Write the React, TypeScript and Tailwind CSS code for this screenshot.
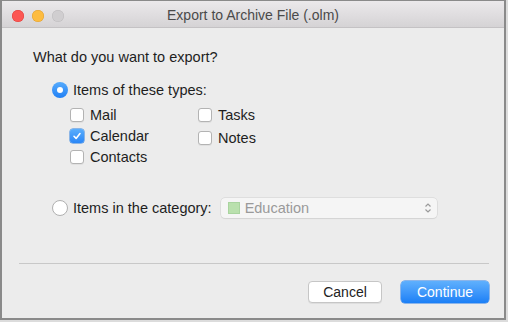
import React from 'react'

function Checkbox({ checked }: { checked?: boolean }) {
  if (checked) {
    return (
      <span className="flex h-[14px] w-[14px] items-center justify-center rounded-[3px] bg-gradient-to-b from-[#5aaefc] to-[#2a86f6] shadow-[0_0_0_0.5px_#2b7fe0]">
        <svg width="10" height="10" viewBox="0 0 10 10">
          <path d="M2 5.3 L4.1 7.4 L8 2.6" fill="none" stroke="white" strokeWidth="1.6" strokeLinecap="round" strokeLinejoin="round" />
        </svg>
      </span>
    )
  }
  return <span className="h-[14px] w-[14px] rounded-[3px] border border-[#b3b3b3] bg-white shadow-[0_1px_0_rgba(0,0,0,0.05)]" />
}

function Radio({ checked }: { checked?: boolean }) {
  if (checked) {
    return (
      <span className="flex h-[16px] w-[16px] items-center justify-center rounded-full bg-gradient-to-b from-[#56abfc] to-[#1f80f5]">
        <span className="h-[6px] w-[6px] rounded-full bg-white" />
      </span>
    )
  }
  return <span className="h-[16px] w-[16px] rounded-full border border-[#b0b0b0] bg-white" />
}

function CheckRow({ label, checked }: { label: string; checked?: boolean }) {
  return (
    <div className="flex h-[21px] items-center gap-[6px]">
      <Checkbox checked={checked} />
      <span>{label}</span>
    </div>
  )
}

export default function App() {
  return (
    <div
      className="h-[322px] w-[508px] bg-[#dcdcdc] text-[14.5px] leading-[18px] text-[#1e1e1e]"
      style={{ fontFamily: '"Liberation Sans", Arial, sans-serif' }}
    >
      <div className="flex h-[320px] w-[506px] flex-col border-[2px] border-[#8a8a8a] border-t-[1px] bg-[#ececec]">
        <div className="relative flex h-[27px] shrink-0 items-center justify-center border-b border-[#c4c2c4] bg-gradient-to-b from-[#ebe9eb] to-[#d5d3d5]">
          <div className="absolute left-[10px] top-[9px] flex gap-[8px]">
            <span className="h-[12px] w-[12px] rounded-full bg-[#fc5753] shadow-[inset_0_0_0_0.5px_#df3e3b]" />
            <span className="h-[12px] w-[12px] rounded-full bg-[#fdbc40] shadow-[inset_0_0_0_0.5px_#de9f34]" />
            <span className="h-[12px] w-[12px] rounded-full bg-[#d0ced0] shadow-[inset_0_0_0_0.5px_#bdbbbd]" />
          </div>
          <span className="pt-[2px] text-[14px] text-[#4a4a4a]">Export to Archive File (.olm)</span>
        </div>

        <div className="flex flex-1 flex-col px-[31px] pt-[20px]">
          <div>What do you want to export?</div>

          <div className="ml-[19px] mt-[15px] flex items-center gap-[5px]">
            <Radio checked />
            <span>Items of these types:</span>
          </div>

          <div className="ml-[37px] mt-[5px] flex">
            <div className="w-[128px]">
              <CheckRow label="Mail" />
              <CheckRow label="Calendar" checked />
              <CheckRow label="Contacts" />
            </div>
            <div>
              <CheckRow label="Tasks" />
              <div className="mt-[2px]">
                <CheckRow label="Notes" />
              </div>
            </div>
          </div>

          <div className="ml-[19px] mt-[31px] flex h-[20px] items-center gap-[5px]">
            <Radio />
            <span>Items in the category:</span>
            <div className="ml-[4px] flex h-[20px] w-[216px] items-center rounded-[4px] bg-[#f5f5f5] pl-[7px] pr-[5px] shadow-[0_0_0_0.5px_#cfcfcf,0_1px_1px_rgba(0,0,0,0.08)]">
              <span className="h-[12px] w-[12px] border border-[#a9d49f] bg-[#b9e0ad]" />
              <span className="ml-[5px] flex-1 text-[#9a9a9a]">Education</span>
              <svg width="8" height="12" viewBox="0 0 8 12">
                <path d="M1.5 4.5 L4 2 L6.5 4.5 M1.5 7.5 L4 10 L6.5 7.5" fill="none" stroke="#9a9a9a" strokeWidth="1.2" />
              </svg>
            </div>
          </div>

          <div className="ml-[-14px] mr-[-16px] mt-[45px] h-px bg-[#c8c8c8]" />

          <div className="mr-[-16px] mt-[17px] flex justify-end gap-[19px]">
            <button className="h-[22px] w-[74px] rounded-[4px] border border-[#c6c6c6] bg-white text-[14px] text-[#222] shadow-[0_1px_0_rgba(0,0,0,0.06)]">
              Cancel
            </button>
            <button className="h-[22px] w-[88px] rounded-[4px] bg-gradient-to-b from-[#5fb0fd] to-[#1a7ff6] text-[14px] text-white shadow-[0_0_0_0.5px_#2a7ee8]">
              Continue
            </button>
          </div>
        </div>
      </div>
    </div>
  )
}
